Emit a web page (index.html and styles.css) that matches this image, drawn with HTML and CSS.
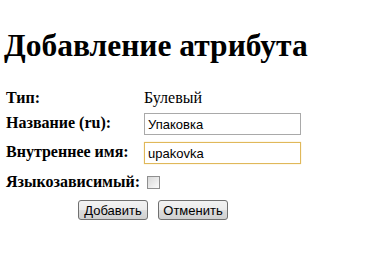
FILE: index.html
```html
<!DOCTYPE html>
<html lang="ru">
<head>
<meta charset="utf-8">
<title>Добавление атрибута</title>
<link rel="stylesheet" href="styles.css">
</head>
<body>
<h1 class="title">Добавление атрибута</h1>
<form class="form">
<table class="grid">
<tr class="row-type"><th class="label">Тип:</th><td class="value">Булевый</td></tr>
<tr class="row-input"><th class="label">Название (ru):</th><td class="value"><input class="field" type="text" value="Упаковка"></td></tr>
<tr class="row-input2"><th class="label">Внутреннее имя:</th><td class="value"><input class="field focused" type="text" value="upakovka"></td></tr>
<tr class="row-check"><th class="label">Языкозависимый:</th><td class="value"><span class="check"></span></td></tr>
<tr><td class="actions" colspan="2"><button class="btn" type="button">Добавить</button><button class="btn" type="button">Отменить</button></td></tr>
</table>
</form>
</body>
</html>
```
FILE: styles.css
```css
html, body {
  background: #fff;
}
body {
  margin: 0;
  padding: 4px 5px;
  font-family: "Liberation Serif", "Times New Roman", serif;
  font-size: 16px;
  color: #000;
}
.title {
  font-size: 31.5px;
  font-weight: bold;
  margin: 23px 0 24px -1px;
  line-height: 37px;
}
.form { margin: 0; }
.grid {
  border-collapse: collapse;
  border-spacing: 0;
}
.label, .value {
  padding: 0;
  vertical-align: top;
  line-height: 18px;
}
.label {
  text-align: left;
  font-weight: bold;
  width: 138px;
  padding-left: 1px;
}
.row-type .label, .row-type .value {
  padding-top: 1px;
  padding-bottom: 6px;
}
.row-input .label, .row-input .value {
  padding-bottom: 7px;
}
.row-input2 .label, .row-input2 .value {
  padding-bottom: 4px;
}
.row-input .label, .row-input2 .label {
  padding-top: 1px;
}
.row-check .label {
  padding-top: 5px;
  padding-bottom: 9px;
}
.row-check .value {
  padding-top: 1px;
  padding-bottom: 11px;
}
.field {
  display: block;
  box-sizing: border-box;
  width: 157px;
  height: 22px;
  border: 1px solid #a9a9a9;
  padding: 1px 3px 0;
  margin: 0;
  font-family: "Liberation Sans", Arial, sans-serif;
  font-size: 13px;
  color: #000;
  background: #fff;
  outline: none;
}
.focused {
  border-color: #e0b85a;
  box-shadow: 0 0 1px #f0d48a;
}
.check {
  display: block;
  box-sizing: border-box;
  width: 13px;
  height: 13px;
  border: 1px solid #8f8f8f;
  background: linear-gradient(135deg, #d8d8d8, #fbfbfb);
  margin: 7px 0 0 3px;
}
.actions {
  text-align: center;
  padding: 0;
  font-size: 0;
}
.btn {
  box-sizing: border-box;
  font-family: "Liberation Sans", Arial, sans-serif;
  font-size: 13px;
  width: 70px;
  height: 20px;
  padding: 0;
  margin: 0 5px;
  border: 1px solid #707070;
  border-radius: 3px;
  background: linear-gradient(#f2f2f2 0%, #ebebeb 50%, #dddddd 51%, #cfcfcf 100%);
  color: #000;
}
```
